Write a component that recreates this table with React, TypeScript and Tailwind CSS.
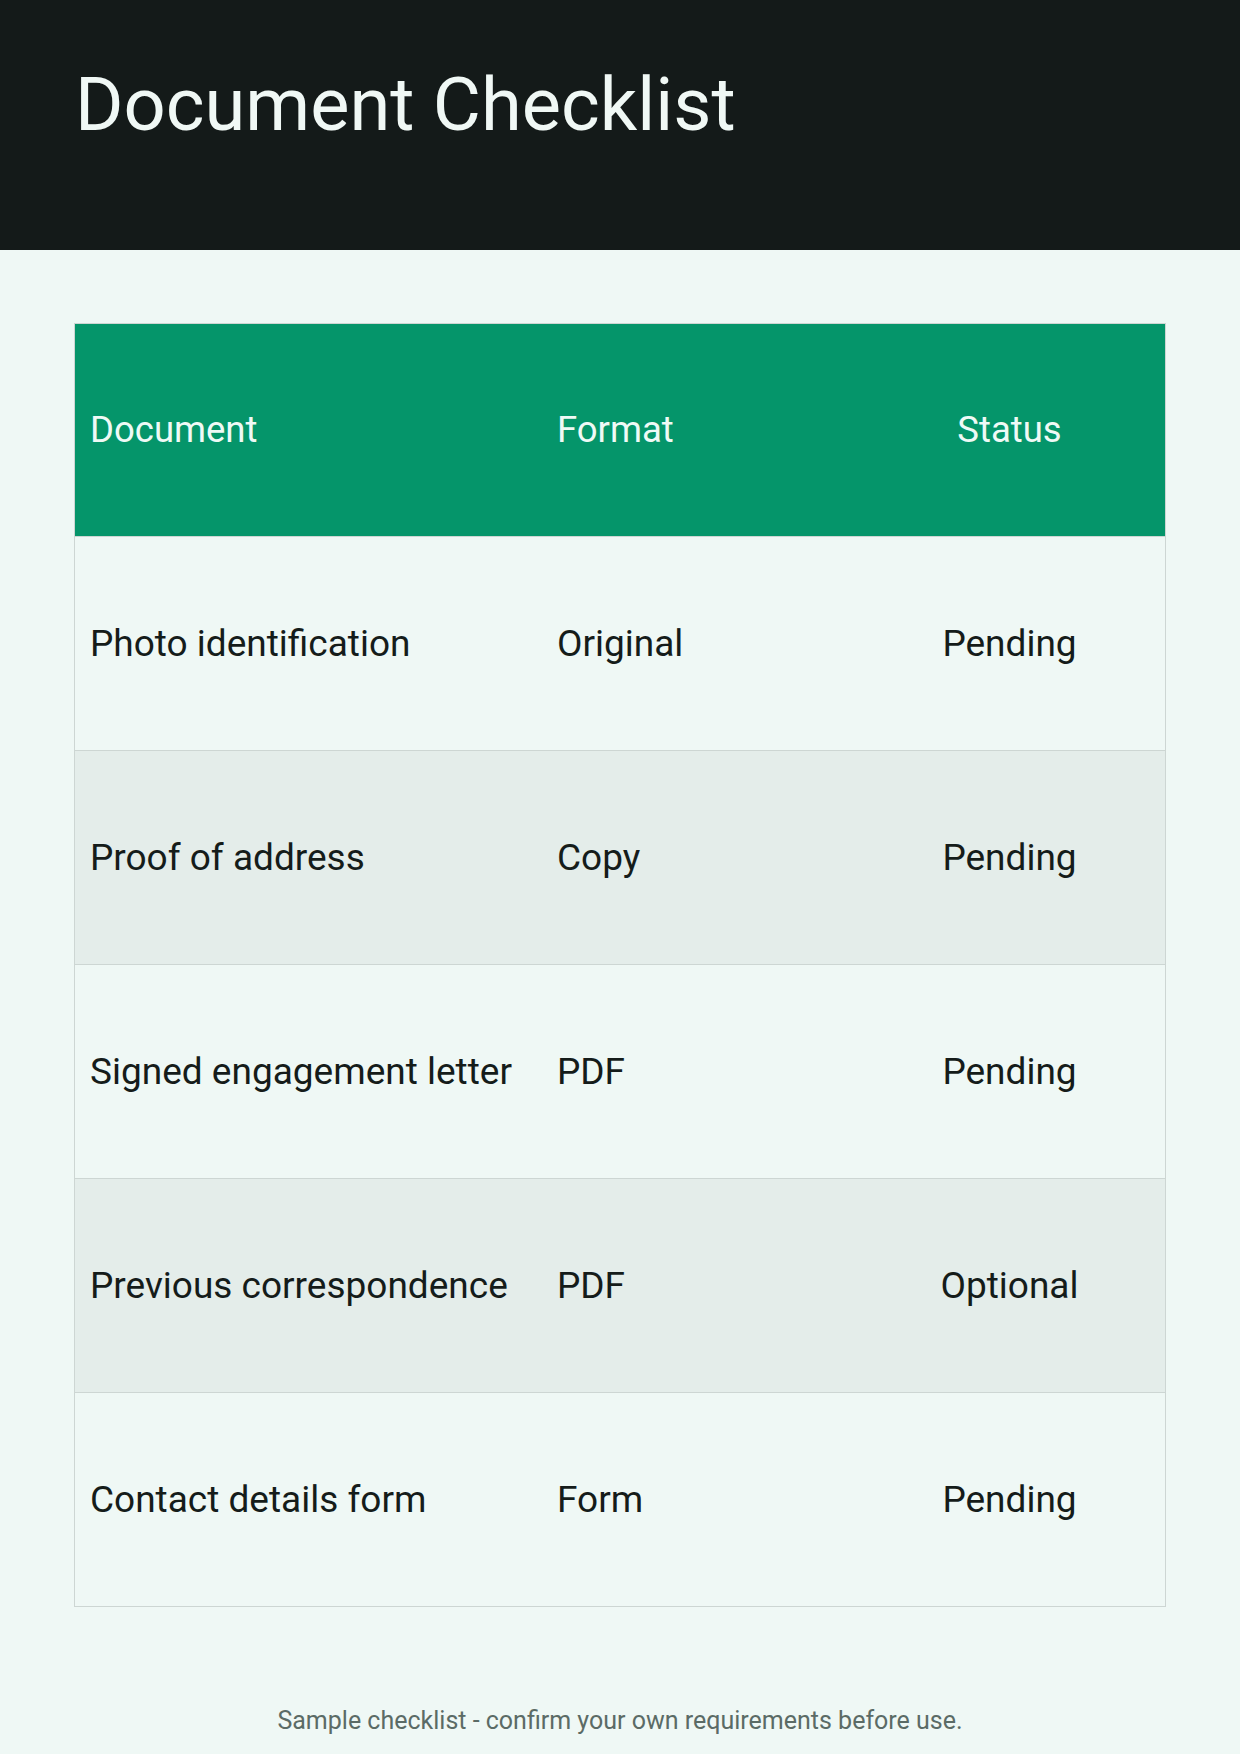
import React from "react";

const rows = [
  { doc: "Photo identification", format: "Original", status: "Pending" },
  { doc: "Proof of address", format: "Copy", status: "Pending" },
  { doc: "Signed engagement letter", format: "PDF", status: "Pending" },
  { doc: "Previous correspondence", format: "PDF", status: "Optional" },
  { doc: "Contact details form", format: "Form", status: "Pending" },
];

export default function App() {
  return (
    <div
      className="w-[1240px] min-h-[1754px] bg-[#eff8f5] flex flex-col"
      style={{ fontFamily: "Roboto, 'Liberation Sans', sans-serif" }}
    >
      <header className="h-[250px] bg-[#141a19] px-[75px] pt-[68px]">
        <h1 className="text-[74px] leading-none text-[#f0f8f5] font-normal">
          Document Checklist
        </h1>
      </header>

      <main className="px-[74px] pt-[73px]">
        <div className="border border-[#cdd6d3]">
          <div className="grid grid-cols-[467px_312px_311px] h-[212px] bg-[#05956a] text-[#effaf6] text-[36.5px] items-center">
            <div className="pl-[15px]">Document</div>
            <div className="pl-[15px]">Format</div>
            <div className="text-center">Status</div>
          </div>
          {rows.map((r, i) => (
            <div
              key={r.doc}
              className={
                "grid grid-cols-[467px_312px_311px] h-[214px] items-center text-[37px] text-[#151c1a] border-t border-[#cdd6d3] " +
                (i % 2 === 1 ? "bg-[#e4edea]" : "bg-[#eff8f5]")
              }
            >
              <div className="pl-[15px] whitespace-nowrap">{r.doc}</div>
              <div className="pl-[15px]">{r.format}</div>
              <div className="text-center">{r.status}</div>
            </div>
          ))}
        </div>
      </main>

      <footer className="pt-[95px] text-center text-[25px] text-[#5b6b66]">
        Sample checklist - confirm your own requirements before use.
      </footer>
    </div>
  );
}
